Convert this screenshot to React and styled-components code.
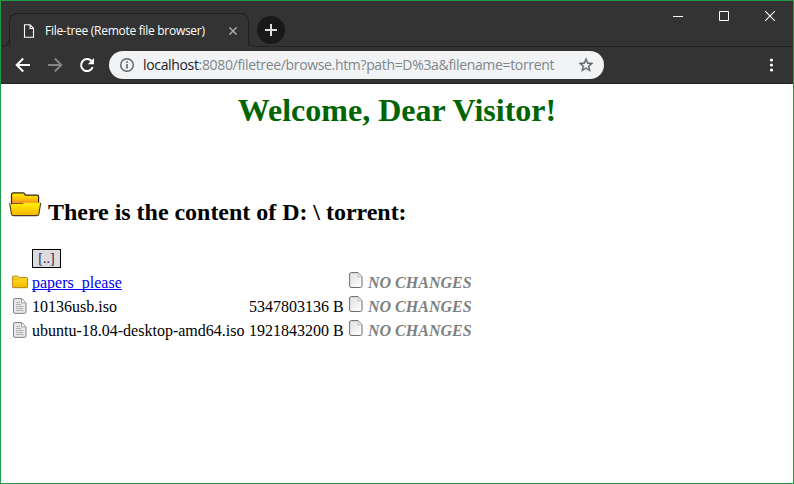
import React from "react";
import styled, { createGlobalStyle } from "styled-components";

const GlobalStyle = createGlobalStyle`
  * { box-sizing: border-box; }
  body { margin: 0; background: #fff; overflow: hidden; }
  svg { display: block; flex: none; }
`;

const Window = styled.div`
  width: 794px;
  height: 484px;
  border: 1px solid #229a4c;
  background: #fff;
  display: flex;
  flex-direction: column;
`;

const TitleBar = styled.header`
  height: 46px;
  background: #333;
  display: flex;
  align-items: flex-end;
  font-family: "Open Sans", "Noto Sans", sans-serif;
`;

const TabEdge = styled.div`
  width: 9px;
  height: 8px;
  border-bottom: 1px solid #222;
  border-${(p) => p.$side}: 1px solid #222;
  border-bottom-${(p) => p.$side}-radius: 8px;
`;

const Tab = styled.div`
  width: 240px;
  height: 34px;
  margin: 0 -1px;
  padding: 0 10px 0 14px;
  display: flex;
  align-items: center;
  background: #333;
  border-top: 1px solid #222;
  border-radius: 8px 8px 0 0;
  box-shadow: inset 1px 0 #222, inset -1px 0 #222;
`;

const TabTitle = styled.span`
  width: 184px;
  margin-left: 10px;
  color: #fff;
  font-size: 12px;
  line-height: 16px;
  letter-spacing: -0.28px;
  white-space: nowrap;
`;

const Baseline = styled.div`
  flex: 1;
  height: 33px;
  border-bottom: 1px solid #222;
  display: flex;
  align-items: flex-start;
`;

const NewTab = styled.button`
  width: 28px;
  height: 28px;
  margin-top: 2px;
  padding: 0;
  border: 0;
  border-radius: 50%;
  background: #191919;
  display: grid;
  place-items: center;
`;

const Caption = styled.div`
  height: 46px;
  width: 138px;
  display: flex;
  border-bottom: 1px solid #222;
`;

const CaptionButton = styled.button`
  width: 46px;
  height: 29px;
  border: 0;
  padding: 0;
  background: none;
  display: grid;
  place-items: center;
`;

const Toolbar = styled.nav`
  height: 37px;
  background: #333;
  border-bottom: 1px solid #222;
  display: flex;
  align-items: center;
  padding: 0 12px 0 12px;
`;

const NavIcons = styled.div`
  display: flex;
  gap: 12px;
  width: 96px;
`;

const AddressBar = styled.div`
  width: 495px;
  height: 28px;
  border-radius: 14px;
  background: #f1f3f4;
  display: flex;
  align-items: center;
  padding: 0 10px;
`;

const Url = styled.span`
  flex: 1;
  margin-left: 8px;
  font-family: "Open Sans", "Noto Sans", sans-serif;
  font-size: 14px;
  line-height: 20px;
  letter-spacing: -0.34px;
  white-space: nowrap;
  color: #80868b;
  b { font-weight: 400; color: #202124; }
`;

const MenuSlot = styled.div`
  margin-left: auto;
`;

const Page = styled.main`
  flex: 1;
  padding: 8px;
  color: #000;
  font: 16px "Liberation Serif", "Times New Roman", serif;
`;

const Welcome = styled.h1`
  margin: 0;
  text-align: center;
  font-size: 32px;
  line-height: 37px;
  color: #006400;
`;

const Heading = styled.h2`
  margin: 62px 0 0;
  height: 32px;
  display: flex;
  align-items: flex-start;
  gap: 6px;
  font-size: 24px;
  line-height: 28px;
  letter-spacing: -0.03px;
  span { margin-top: 7px; white-space: nowrap; }
`;

const Listing = styled.div`
  margin: 23px 0 0 3px;
  display: grid;
  grid-template-columns: 18px 215px 98px 17px auto;
  grid-template-rows: 24px;
  grid-auto-rows: 24px;
  column-gap: 2px;
  align-items: center;
  justify-content: start;
  white-space: nowrap;
`;

const UpLink = styled.a`
  grid-column: 2 / -1;
  justify-self: start;
  width: 29px;
  height: 19px;
  border: 1px solid #000;
  background: #dcdcdc;
  color: #30105c;
  font-size: 14px;
  line-height: 18px;
  text-align: center;
`;

const Cell = styled.span`
  padding-top: 2px;
`;

const FolderLink = styled.a`
  color: #0000ee;
  text-decoration: underline;
  text-decoration-skip-ink: none;
`;

const Status = styled(Cell)`
  color: #808080;
  font-weight: bold;
  font-style: italic;
`;

const StatusIcon = styled.span`
  align-self: start;
  padding-top: 2px;
`;

const DocIcon = () => (
  <svg width="16" height="16" viewBox="0 0 16 16">
    <path d="M3 .6h6.700l4.300 4.200v9q0 1.600-1.600 1.600H3.100Q1.500 15.400 1.500 13.800V2.100Q1.500 .6 3 .6z" fill="#e9e9e9" stroke="#808080" />
    <path d="M9.500 1v4h4" fill="#fff" stroke="#999" strokeWidth=".9" />
    <path d="M4 4.500h4M4 6.500h5M4 8.500h7.500M4 10.500h7.500M4 12.500h7.500" stroke="#b0b0b0" />
  </svg>
);

const SmallFolder = () => (
  <svg width="16" height="16" viewBox="0 0 16 16">
    <defs>
      <linearGradient id="sf" x2="0" y2="1"><stop stopColor="#ffe22e" /><stop offset="1" stopColor="#f4b800" /></linearGradient>
    </defs>
    <path d="M.6 2.900q0-.9.9-.9h4.100l1.500 1.600h7.400q1 0 1 1v8.200q0 .9-.9.9H1.500q-.9 0-.9-.9z" fill="url(#sf)" stroke="#a77a08" strokeWidth=".9" />
    <path d="M1 5.200h4.800l1.400-1" fill="none" stroke="#e0a500" strokeWidth=".8" />
  </svg>
);

const OpenFolder = () => (
  <svg width="33" height="32" viewBox="0 0 33 32">
    <defs>
      <linearGradient id="fb" x2="0" y2="1"><stop stopColor="#ffe800" /><stop offset=".5" stopColor="#ffc800" /><stop offset="1" stopColor="#f08030" /></linearGradient>
      <linearGradient id="ff" x2="0" y2="1"><stop stopColor="#fff200" /><stop offset="1" stopColor="#f9b400" /></linearGradient>
    </defs>
    <path d="M2.500 13V3.600q0-1.700 1.800-1.700h9.700q1.600 0 2 1.500l.4.700h11.600q1.600 0 1.600 1.500V13z" fill="url(#fb)" stroke="#33271c" strokeWidth="1.200" />
    <path d="M.7 13h12.500l2.500-1.200h16.100L29.900 23q-.2 1.600-1.800 1.600H4.200q-1.500 0-1.800-1.600z" fill="url(#ff)" />
    <path d="M.7 12.200 2.400 23q.3 1.600 1.800 1.600H28q1.600 0 1.900-1.600l1.800-11.200" fill="none" stroke="#4a3a20" strokeWidth="1.100" />
  </svg>
);

const BlankPage = () => (
  <svg width="16" height="17" viewBox="0 0 16 17">
    <defs><linearGradient id="bp" x2="1" y2="1"><stop stopColor="#dce1e6" /><stop offset="1" stopColor="#fff" /></linearGradient></defs>
    <path d="M2.300.6h6.800l3.900 4.100v9.200q0 1.600-1.600 1.600H2.100Q.6 15.500.6 13.900V2.100Q.6 .6 2.300.6z" fill="url(#bp)" stroke="#6c6c6c" />
    <path d="M8.900 1q.7 2.200 0 3.800 2-.5 4 .2" fill="#fff" stroke="#aaa" strokeWidth=".8" />
  </svg>
);

const FILES = [
  { name: "papers_please", size: "", folder: true },
  { name: "10136usb.iso", size: "5347803136 B" },
  { name: "ubuntu-18.04-desktop-amd64.iso", size: "1921843200 B" },
];

export default function App() {
  return (
    <Window>
      <GlobalStyle />
      <TitleBar>
        <TabEdge $side="right" />
        <Tab>
          <svg width="12" height="14" viewBox="0 0 12 14">
            <path d="M1.500.7h5.500L10.500 4.300v9H1.500z M7 .8v3.700h3.500" fill="none" stroke="#fff" strokeWidth="1.100" />
          </svg>
          <TabTitle>File-tree (Remote file browser)</TabTitle>
          <svg width="8" height="8" viewBox="0 0 8 8"><path d="M.4.4l7.200 7.200M7.600.4L.4 7.600" stroke="#aaa" strokeWidth="1.500" /></svg>
        </Tab>
        <TabEdge $side="left" />
        <Baseline>
          <NewTab>
            <svg width="12" height="12"><path d="M6 0v12M0 6h12" stroke="#ddd" strokeWidth="2" /></svg>
          </NewTab>
        </Baseline>
        <Caption>
          <CaptionButton><svg width="10" height="10"><path d="M0 5.500h10" stroke="#fff" /></svg></CaptionButton>
          <CaptionButton><svg width="10" height="10"><path d="M.5.5h9v9h-9z" fill="none" stroke="#fff" /></svg></CaptionButton>
          <CaptionButton><svg width="10" height="10"><path d="M0 0l10 10M10 0L0 10" stroke="#fff" strokeWidth="1.100" /></svg></CaptionButton>
        </Caption>
      </TitleBar>
      <Toolbar>
        <NavIcons>
          <svg width="20" height="20" viewBox="0 0 20 20"><path d="M17 10H4M10.200 3.500L3.700 10l6.500 6.500" fill="none" stroke="#fff" strokeWidth="2" /></svg>
          <svg width="20" height="20" viewBox="0 0 20 20"><path d="M3 10h13M9.800 3.500l6.500 6.500-6.500 6.500" fill="none" stroke="#858585" strokeWidth="2" /></svg>
          <svg width="20" height="20" viewBox="0 0 20 20"><path d="M15.700 12.200a6 6 0 1 1-1.200-6.200l1.500 1.500" fill="none" stroke="#fff" strokeWidth="2" /><path d="M17 3v6.200h-6.200z" fill="#fff" /></svg>
        </NavIcons>
        <AddressBar>
          <svg width="16" height="16" viewBox="0 0 16 16"><circle cx="8" cy="8" r="6.300" fill="none" stroke="#5f6368" strokeWidth="1.400" /><path d="M8 4.300v1.600M8 7v4.600" stroke="#5f6368" strokeWidth="1.600" /></svg>
          <Url><b>localhost</b>:8080/filetree/browse.htm?path=D%3a&amp;filename=torrent</Url>
          <svg width="16" height="16" viewBox="1 1 22 22"><path d="M22 9.240l-7.190-.62L12 2 9.190 8.630 2 9.240l5.460 4.730L5.820 21 12 17.270 18.180 21l-1.630-7.030L22 9.240zM12 15.400l-3.760 2.270 1-4.280-3.320-2.880 4.380-.38L12 6.100l1.710 4.040 4.380.38-3.320 2.880 1 4.280L12 15.400z" fill="#5f6368" stroke="#5f6368" strokeWidth=".4" /></svg>
        </AddressBar>
        <MenuSlot>
          <svg width="18" height="16" viewBox="0 0 18 16"><g fill="#fff"><circle cx="8.500" cy="3" r="1.600" /><circle cx="8.500" cy="8" r="1.600" /><circle cx="8.500" cy="13" r="1.600" /></g></svg>
        </MenuSlot>
      </Toolbar>
      <Page>
        <Welcome>Welcome, Dear Visitor!</Welcome>
        <Heading><OpenFolder /><span>There is the content of D: \ torrent:</span></Heading>
        <Listing>
          <UpLink>[..]</UpLink>
          {FILES.map((f) => (
            <React.Fragment key={f.name}>
              {f.folder ? <SmallFolder /> : <DocIcon />}
              <Cell>{f.folder ? <FolderLink>{f.name}</FolderLink> : f.name}</Cell>
              <Cell>{f.size}</Cell>
              <StatusIcon><BlankPage /></StatusIcon>
              <Status>NO CHANGES</Status>
            </React.Fragment>
          ))}
        </Listing>
      </Page>
    </Window>
  );
}
